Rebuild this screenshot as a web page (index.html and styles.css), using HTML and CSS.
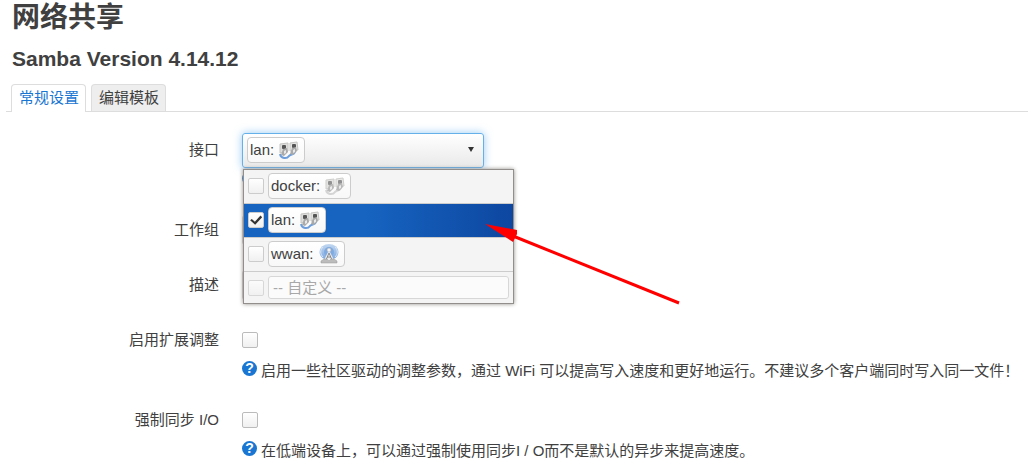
FILE: index.html
```html
<!DOCTYPE html>
<html lang="zh-CN">
<head>
    <meta charset="UTF-8">
    <meta name="viewport" content="width=device-width, initial-scale=1.0">
    <title>网络共享</title>
    <link rel="stylesheet" href="styles.css">
</head>
<body>

    <!-- shared icons -->
    <svg class="sprite" aria-hidden="true">
        <defs>
            <linearGradient id="wave" x1="0" y1="0" x2="0" y2="1">
                <stop offset="0" stop-color="#b4ceee"/>
                <stop offset="1" stop-color="#5b92d8"/>
            </linearGradient>
        </defs>
        <symbol id="bridge" viewBox="0 0 20 20">
            <path d="M1 14c1 5 7 5 9 2 2-2 5-1 6-4" fill="none" stroke="var(--cable)" stroke-width="2"/>
            <path d="M1 4l8-1v8l-8 2z" fill="#dededc" stroke="#c4c4c2" stroke-width="1"/>
            <path d="M11 3l7-1 1 8-8 1z" fill="#e4e4e2" stroke="#c4c4c2" stroke-width="1"/>
            <rect x="3" y="5" width="4" height="4" rx="1" fill="var(--jack)"/>
            <rect x="13" y="4" width="4" height="4" rx="1" fill="var(--jack)"/>
            <path d="M4 9l4-1 1 4-4 4-3-1z" fill="#aaa"/>
            <path d="M13 8l4-1 1 4-4 4-3-1z" fill="#aaa"/>
            <path d="M5 11l2-1v3l-2 1zM14 10l2-1v3l-2 1z" fill="#e8e8e8"/>
        </symbol>
        <symbol id="wifi" viewBox="0 0 20 20">
            <ellipse cx="10" cy="8" rx="9.500" ry="8" fill="url(#wave)" opacity=".8"/>
            <path d="M4 3c-3 3-3 7 0 10M16 3c3 3 3 7 0 10" fill="none" stroke="#dce8f7" stroke-width="1"/>
            <circle cx="10" cy="8" r="5" fill="#7fabe2"/>
            <path d="M10 6l-5 10h10z" fill="#ececec"/>
            <path d="M10 9l-3 7M10 9l3 7M8 13h4" fill="none" stroke="#8a8a8a" stroke-width="1"/>
            <circle cx="10" cy="6" r="2" fill="#f4f4f4" stroke="#aaa" stroke-width=".5"/>
            <path d="M2 17l3-2h3l2 2 2-2h3l3 2v2H2z" fill="#bcbcbc" stroke="#999" stroke-width=".5"/>
        </symbol>
    </svg>

    <header>
        <h1>网络共享</h1>
        <h2>Samba Version 4.14.12</h2>
    </header>

    <nav class="tabs">
        <a class="active" href="#general">常规设置</a>
        <a href="#template">编辑模板</a>
    </nav>

    <form id="general">
        <div class="row">
            <label class="title" for="interface">接口</label>
            <div class="field">
                <div class="control">
                    <button type="button" id="interface" class="dropdown" aria-expanded="true">
                        <span class="badge">lan: <svg class="icon"><use href="#bridge"/></svg></span>
                        <span class="caret"></span>
                    </button>
                </div>
                <ul class="menu">
                    <li>
                        <input type="checkbox" id="if-docker">
                        <label class="badge" for="if-docker">docker: <svg class="icon off"><use href="#bridge"/></svg></label>
                    </li>
                    <li class="selected">
                        <input type="checkbox" id="if-lan" checked>
                        <label class="badge" for="if-lan">lan: <svg class="icon"><use href="#bridge"/></svg></label>
                    </li>
                    <li>
                        <input type="checkbox" id="if-wwan">
                        <label class="badge" for="if-wwan">wwan: <svg class="icon"><use href="#wifi"/></svg></label>
                    </li>
                    <li class="custom">
                        <input type="checkbox" aria-label="自定义">
                        <input type="text" placeholder="-- 自定义 --" aria-label="自定义">
                    </li>
                </ul>
                <svg class="arrow" viewBox="0 0 200 84" aria-hidden="true">
                    <path d="M28 12L194 79" stroke="#f00" stroke-width="3"/>
                    <path d="M0 0l32 6v4l-4 8z" fill="#f00"/>
                </svg>
                <p class="help"><span class="mark">?</span></p>
            </div>
        </div>

        <div class="row">
            <label class="title" for="workgroup">工作组</label>
            <div class="field">
                <div class="control"><input type="text" id="workgroup"></div>
            </div>
        </div>

        <div class="row">
            <label class="title" for="description">描述</label>
            <div class="field">
                <div class="control"><input type="text" id="description"></div>
            </div>
        </div>

        <div class="row">
            <label class="title" for="tuning">启用扩展调整</label>
            <div class="field">
                <div class="control"><input type="checkbox" id="tuning"></div>
                <p class="help"><span class="mark">?</span>启用一些社区驱动的调整参数，通过 WiFi 可以提高写入速度和更好地运行。不建议多个客户端同时写入同一文件！</p>
            </div>
        </div>

        <div class="row">
            <label class="title" for="sync">强制同步 I/O</label>
            <div class="field">
                <div class="control"><input type="checkbox" id="sync"></div>
                <p class="help"><span class="mark">?</span>在低端设备上，可以通过强制使用同步I / O而不是默认的异步来提高速度。</p>
            </div>
        </div>
    </form>

</body>
</html>
```

FILE: styles.css
```css
* {
    box-sizing: border-box;
}

body {
    margin: 0;
    padding-left: 6px;
    font-family: "Liberation Sans", "Noto Sans CJK SC", sans-serif;
    font-size: 15px;
    line-height: 20px;
    color: #404040;
    background: #fff;
}

.sprite {
    position: absolute;
    width: 0;
    height: 0;
}

header {
    padding-left: 6px;
}

h1 {
    margin: 0;
    font-size: 28px;
    line-height: 36px;
}

h2 {
    margin: 12px 0 14px;
    font-size: 21px;
    line-height: 22px;
}

.tabs {
    display: flex;
    gap: 5px;
    padding-left: 5px;
    border-bottom: 1px solid #ddd;
}

.tabs a {
    padding: 3px 6px 3px 7px;
    border: 1px solid #ddd;
    border-bottom: none;
    border-radius: 4px 4px 0 0;
    background: #eee;
    color: #404040;
    text-decoration: none;
}

.tabs .active {
    margin-bottom: -1px;
    padding-bottom: 4px;
    background: #fff;
    color: #1976d2;
}

form {
    padding-top: 20px;
}

.row {
    display: flex;
    gap: 23px;
    margin-bottom: 20px;
}

.row:last-child {
    margin-bottom: 0;
}

.title {
    flex: 0 0 213px;
    line-height: 35px;
    text-align: right;
}

.field {
    position: relative;
    flex: 1;
}

.control {
    display: flex;
    align-items: center;
    height: 35px;
}

.help {
    display: flex;
    align-items: center;
    gap: 4px;
    margin: 0;
    height: 27px;
}

.row:has(.help) {
    margin-bottom: 18px;
}

.mark {
    width: 15px;
    height: 15px;
    margin-bottom: 4px;
    border-radius: 50%;
    background: #1976d2;
    color: #fff;
    font-size: 14px;
    font-weight: bold;
    line-height: 15px;
    text-align: center;
}

input,
button {
    margin: 0;
    border: 1px solid #ccc;
    border-radius: 3px;
    font: inherit;
    color: inherit;
}

input[type="text"] {
    width: 210px;
    height: 30px;
    padding: 0 4px;
    background: #fff;
}

input[type="checkbox"] {
    appearance: none;
    flex: none;
    width: 16px;
    height: 16px;
    border-color: #bbb;
    border-radius: 2px;
    background: linear-gradient(#fff, #f0f0f0);
}

input[type="checkbox"]:checked::after {
    content: "";
    display: block;
    width: 14px;
    height: 14px;
    background: #333;
    clip-path: polygon(8% 52%, 20% 42%, 42% 62%, 82% 18%, 94% 30%, 44% 84%);
}

.menu input[type="checkbox"] {
    border-color: #ccc;
}

.dropdown {
    display: flex;
    align-items: center;
    justify-content: space-between;
    width: 242px;
    height: 35px;
    margin-top: 2px;
    padding: 0 9px 2px 4px;
    border-color: #66b0ea;
    background: linear-gradient(#fff, #e9e9e9);
    box-shadow: 0 0 8px rgba(82, 168, 236, 0.6);
}

.caret {
    border: 3px solid transparent;
    border-top: 5px solid #333;
    border-bottom: none;
}

.badge {
    display: flex;
    align-items: center;
    gap: 5px;
    height: 26px;
    padding: 0 5px 0 2px;
    border: 1px solid #ccc;
    border-radius: 4px;
    background: linear-gradient(#fff, #f8f8f8);
}

.icon {
    --cable: #6d9edb;
    --jack: #555;
    width: 20px;
    height: 20px;
}

.off {
    --cable: #ccc;
    --jack: #777;
    opacity: 0.8;
}

.menu {
    position: absolute;
    top: 37px;
    left: 1px;
    z-index: 1;
    width: 271px;
    margin: 0;
    padding: 0;
    border: 1px solid #918e8c;
    background: #f4f4f4;
    box-shadow: 0 0 4px #918c88;
    list-style: none;
}

.menu li {
    display: flex;
    align-items: center;
    gap: 4px;
    height: 34px;
    padding: 0 4px 1px;
    border-bottom: 1px solid #ccc;
}

.menu .selected {
    background: linear-gradient(90deg, #1664c0 45%, #0d47a1);
}

.menu .custom {
    height: 31px;
    padding-bottom: 0;
    border-bottom: none;
}

.custom input {
    opacity: 0.7;
}

.custom input[type="text"] {
    flex: 1;
    height: 23px;
}

.custom ::placeholder {
    color: #888;
}

.arrow {
    position: absolute;
    top: 92px;
    left: 243px;
    z-index: 2;
    width: 200px;
    height: 84px;
}
```
